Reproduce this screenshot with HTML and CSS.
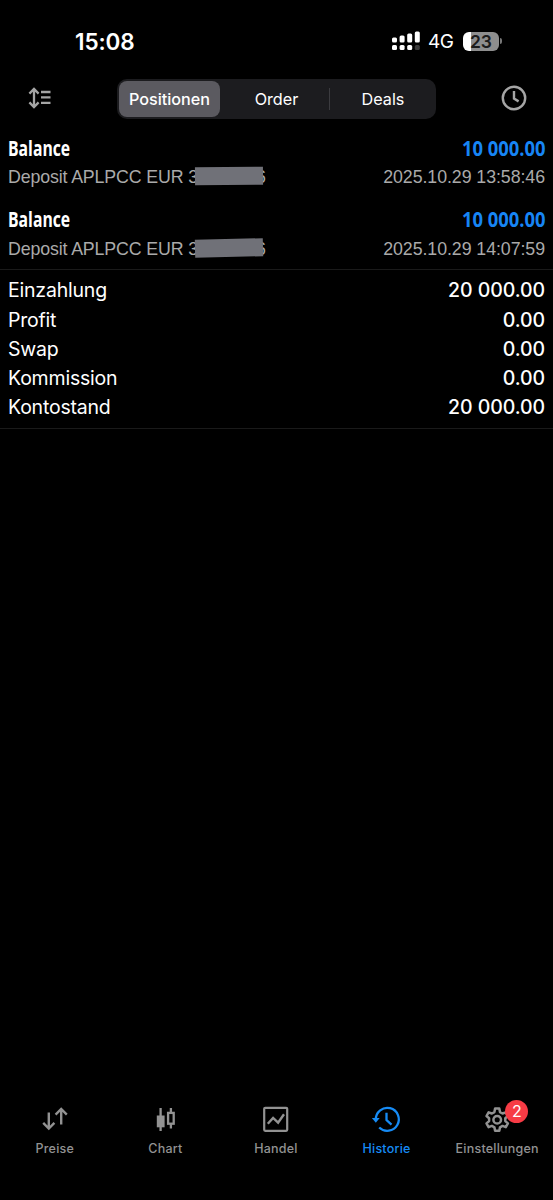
FILE: index.html
```html
<!DOCTYPE html>
<html lang="de">
<head>
  <meta charset="UTF-8">
  <title>Historie</title>
  <link rel="stylesheet" href="styles.css">
</head>
<body>
  <div class="status">
    <span class="time">15:08</span>
    <div class="status-right">
      <svg class="signal" width="28" height="20" viewBox="0 0 28 20" fill="#fff">
        <rect x="0" y="6.5" width="5" height="5" rx="1.5"/>
        <rect x="7.6" y="4.5" width="5" height="7" rx="1.5"/>
        <rect x="15.2" y="2.5" width="5" height="9" rx="1.5"/>
        <rect x="22.8" y="0.5" width="5" height="11" rx="1.5"/>
        <rect x="0" y="14" width="5" height="5" rx="1.5"/>
        <rect x="7.6" y="14" width="5" height="5" rx="1.5"/>
        <rect x="15.2" y="14" width="5" height="5" rx="1.5"/>
        <rect x="22.8" y="14" width="5" height="5" rx="1.5" fill="#3a3a3a"/>
      </svg>
      <span class="network">4G</span>
      <div class="battery">23</div>
      <div class="battery-tip"></div>
    </div>
  </div>

  <div class="toolbar">
    <svg class="sort" width="24" height="22" viewBox="0 0 24 22" fill="none" stroke="#a5a5a5" stroke-width="2.3">
      <path d="M6 2.5v17M1.4 6.6L6 2l4.6 4.6M1.4 15.4L6 20l4.6-4.6"/>
      <path d="M13 5h9.5M13 10.4h9.5M13 15.8h9.5"/>
    </svg>
    <div class="segments">
      <div class="segment active">Positionen</div>
      <div class="segment order">Order</div>
      <div class="divider"></div>
      <div class="segment deals">Deals</div>
    </div>
    <svg class="clock" width="26" height="26" viewBox="0 0 26 26" fill="none" stroke="#a5a5a5" stroke-width="2.4">
      <circle cx="13" cy="13" r="11.2"/>
      <path d="M13 6v7.6l4.6 2.8"/>
    </svg>
  </div>

  <div class="deals-list">
    <div class="deal">
      <div class="row main"><span class="name">Balance</span><span class="amount">10 000.00</span></div>
      <div class="row sub">
        <span class="comment">Deposit APLPCC EUR 3<span class="hidden first"></span>6</span>
        <span class="date">2025.10.29 13:58:46</span>
      </div>
    </div>
    <div class="deal">
      <div class="row main"><span class="name">Balance</span><span class="amount">10 000.00</span></div>
      <div class="row sub">
        <span class="comment">Deposit APLPCC EUR 3<span class="hidden second"></span>6</span>
        <span class="date">2025.10.29 14:07:59</span>
      </div>
    </div>
  </div>

  <div class="summary">
    <div class="row"><span>Einzahlung</span><span class="value">20 000.00</span></div>
    <div class="row"><span>Profit</span><span class="value">0.00</span></div>
    <div class="row"><span>Swap</span><span class="value">0.00</span></div>
    <div class="row"><span>Kommission</span><span class="value">0.00</span></div>
    <div class="row"><span>Kontostand</span><span class="value">20 000.00</span></div>
  </div>

  <div class="tabs">
    <div class="tab">
      <svg width="28" height="28" viewBox="0 0 28 28" fill="none" stroke="currentColor" stroke-width="2.4">
        <path d="M7.8 7.5v16M2.2 17.9l5.6 5.6 5.6-5.6M20.2 19.5V4M14.6 9.6L20.2 4l5.6 5.6"/>
      </svg>
      <span>Preise</span>
    </div>
    <div class="tab">
      <svg width="28" height="28" viewBox="0 0 28 28" fill="none" stroke="currentColor" stroke-width="2.3">
        <path d="M8.6 3v23M18.9 3v4.5M18.9 19v4.5"/>
        <rect x="4.8" y="10.5" width="7.8" height="11.8" fill="currentColor" stroke="none"/>
        <rect x="16.1" y="7.9" width="5.6" height="10.8"/>
      </svg>
      <span>Chart</span>
    </div>
    <div class="tab">
      <svg width="28" height="28" viewBox="0 0 28 28" fill="none" stroke="currentColor" stroke-width="2.2">
        <rect x="2.2" y="2.8" width="23" height="23" rx="1"/>
        <path d="M5.8 18.8l5.3-5.8 5 4.7L22 9.3" stroke-width="2.4"/>
      </svg>
      <span>Handel</span>
    </div>
    <div class="tab current">
      <svg width="28" height="28" viewBox="0 0 28 28" fill="none" stroke="currentColor" stroke-width="2.3">
        <path d="M2.8 14.5a11.5 11.5 0 1 1 3.4 8"/>
        <path d="M-1.1 12.9h7.8L2.8 17.7z" fill="currentColor" stroke="none"/>
        <path d="M13.5 7.7v7.4l5 4.6"/>
      </svg>
      <span>Historie</span>
    </div>
    <div class="tab">
      <svg width="28" height="28" viewBox="0 0 28 28" fill="none" stroke="currentColor" stroke-width="2.5" stroke-linejoin="round">
        <path d="M11.1 3.6h4.2l.7 3.5 2.5 1.4 3.3-1.2 2.1 3.7-2.6 2.3v2.8l2.6 2.3-2.1 3.7-3.3-1.2-2.5 1.4-.7 3.5h-4.2l-.7-3.5-2.5-1.4-3.3 1.2-2.1-3.7 2.6-2.3v-2.8l-2.6-2.3 2.1-3.7 3.3 1.2 2.5-1.4z"/>
        <circle cx="13.2" cy="14.7" r="3.8"/>
      </svg>
      <b class="badge">2</b>
      <span>Einstellungen</span>
    </div>
  </div>
</body>
</html>
```

FILE: styles.css
```css
* { box-sizing: border-box; }
body { margin: 0; width: 553px; height: 1200px; background: #000; color: #fff; font-family: Inter, sans-serif; display: flex; flex-direction: column; overflow: hidden; }

.status { height: 79px; padding: 28px 51px 0 75px; display: flex; justify-content: space-between; align-items: flex-start; }
.time { font-size: 22.5px; line-height: 27px; font-weight: 600; letter-spacing: -0.1px; }
.status-right { display: flex; align-items: center; height: 26px; }
.network { font-size: 19px; margin-left: 8px; width: 35px; letter-spacing: -0.5px; }
.battery { width: 36px; height: 19px; border-radius: 6px; background: linear-gradient(90deg, #fff 8px, #8e8e8e 8px); color: #1c1c1c; font-size: 17.5px; font-weight: 600; line-height: 19px; text-align: center; }
.battery-tip { width: 2px; height: 6px; margin-left: 1px; border-radius: 0 2px 2px 0; background: #777; }

.toolbar { height: 55px; display: flex; align-items: flex-start; }
.sort { margin: 8px 0 0 28px; }
.segments { width: 319px; height: 40px; margin-left: 65px; padding: 2px; display: flex; align-items: center; background: #1c1c1f; border-radius: 10px; }
.segment { text-align: center; font-size: 16.2px; line-height: 36px; }
.active { width: 101px; height: 36px; background: #5b5a60; border-radius: 8px; font-weight: 500; }
.order { width: 109px; padding-left: 4px; }
.deals { flex: 1; padding-left: 2px; }
.divider { width: 1px; height: 22px; background: #3b3b3f; }
.clock { margin: 6px 0 0 65px; }

.row { display: flex; justify-content: space-between; align-items: center; }
.deals-list { padding: 0 8px; height: 136px; border-bottom: 1px solid #1a1a1a; }
.deal { height: 71.6px; }
.main { height: 27px; font-family: "Open Sans", sans-serif; font-size: 21px; font-weight: 700; }
.name { transform: scaleX(0.75); transform-origin: left; }
.amount { color: #1785f5; transform: scaleX(0.875); transform-origin: right; }
.sub { height: 33px; color: #aaa; font-family: "Liberation Sans", Arial, sans-serif; font-size: 17.8px; }
.comment { display: flex; align-items: center; white-space: pre; letter-spacing: -0.14px; }
.date { letter-spacing: -0.07px; }
.hidden { width: 68px; height: 18px; margin: -3px -7px 0 -3px; background: #707178; position: relative; }
.first { transform: rotate(-0.3deg); }
.second { transform: rotate(-1.4deg); }

.summary { height: 159px; padding: 5.6px 8px 0; border-bottom: 1px solid #1a1a1a; font-size: 19.5px; }
.summary .row { height: 29.3px; letter-spacing: -0.2px; }
.summary .value { font-weight: 500; letter-spacing: -0.08px; }

.tabs { margin-top: auto; height: 96px; display: flex; color: #929292; }
.tab { flex: 1; display: flex; flex-direction: column; align-items: center; position: relative; font-size: 12.5px; line-height: 16px; font-weight: 500; letter-spacing: 0.22px; }
.tab svg { margin: 1px 0 8px; overflow: visible; }
.tab span { margin-right: 1px; }
.current { color: #168bf5; }
.badge { position: absolute; left: 63px; top: -4px; width: 23px; height: 23px; border-radius: 50%; background: #f73b45; color: #fff; font-size: 16px; font-weight: 400; line-height: 23px; text-align: center; letter-spacing: 0; }
```
